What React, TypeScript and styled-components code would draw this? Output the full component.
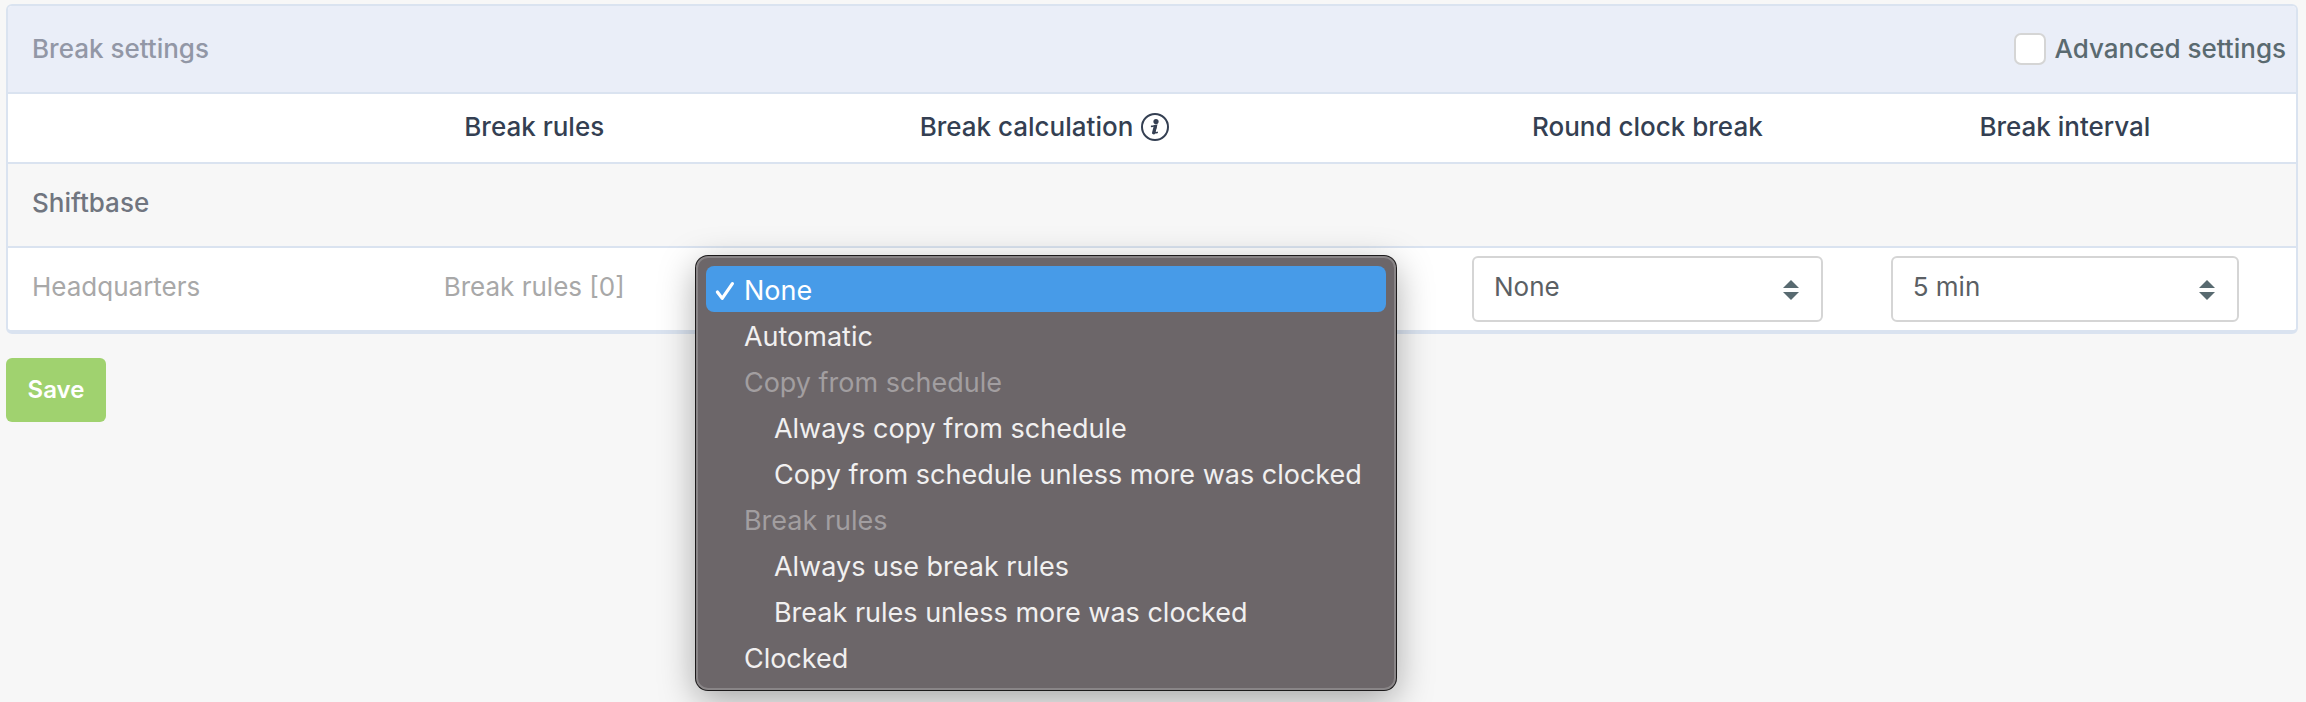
import React from "react";
import styled, { createGlobalStyle } from "styled-components";

const line = "#dae3f0";

const GlobalStyle = createGlobalStyle`
  *, *::before, *::after { box-sizing: border-box; }
  body {
    margin: 0;
    background: #f7f7f7;
    font: 400 26px/32px Inter, sans-serif;
    color: #a8a8a8;
  }
  button, input, select { font: inherit; }
`;

const Page = styled.form`
  min-height: 100vh;
  padding: 4px 8px 4px 6px;
`;

const Panel = styled.section`
  background: #fff;
  border: 2px solid ${line};
  border-bottom-width: 4px;
  border-radius: 6px;
`;

const PanelHeader = styled.header`
  display: flex;
  align-items: center;
  justify-content: space-between;
  padding: 27px 10px 27px 24px;
  background: #eaeef8;
  border-bottom: 2px solid ${line};
  border-radius: 4px 4px 0 0;
`;

const Title = styled.h1`
  margin: 0;
  font-size: 26px;
  font-weight: 500;
  color: #9297a6;
`;

const CheckLabel = styled.label`
  display: flex;
  align-items: center;
  gap: 9px;
  font-weight: 500;
  color: #5a6a70;
`;

const Checkbox = styled.input`
  appearance: none;
  width: 32px;
  height: 32px;
  margin: 0;
  background: #fff;
  border: 2px solid #d5d5d5;
  border-radius: 7px;
  &:checked { background: #479be8; }
`;

const Table = styled.table`
  width: 100%;
  table-layout: fixed;
  border-collapse: separate;
  border-spacing: 0;
`;

const Column = styled.col<{ $share?: string }>`
  width: ${(p) => p.$share ?? "auto"};
`;

const HeadCell = styled.th`
  padding: 17px 0 19px;
  font-weight: 500;
  color: #343f52;
  border-bottom: 2px solid ${line};
`;

const HeadContent = styled.span`
  display: inline-flex;
  align-items: center;
  gap: 8px;
`;

const GroupCell = styled.th`
  padding: 23px 24px 27px;
  text-align: left;
  font-weight: 500;
  color: #70757f;
  background: #f7f7f7;
  border-bottom: 2px solid ${line};
`;

const NameCell = styled.th`
  padding: 6px 24px 10px;
  text-align: left;
  font-weight: 400;
`;

const RulesCell = styled.td`
  padding: 6px 0 10px;
  text-align: center;
`;

const RulesLink = styled.a`
  color: inherit;
  text-decoration: none;
`;

const ControlCell = styled.td`
  padding: 8px 34px;
`;

const SelectBox = styled.div`
  position: relative;
`;

const Select = styled.select`
  display: block;
  appearance: none;
  width: 100%;
  height: 66px;
  padding: 0 56px 4px 20px;
  color: #5b6064;
  background: #fff;
  border: 2px solid #d5d5d5;
  border-radius: 6px;
`;

const SelectArrows = styled.svg`
  position: absolute;
  top: 24px;
  right: 24px;
  pointer-events: none;
`;

const MenuAnchor = styled.div`
  position: relative;
  height: 66px;
`;

const Menu = styled.ul`
  position: absolute;
  z-index: 1;
  top: 0;
  left: 11px;
  right: 8px;
  margin: 0;
  padding: 8px;
  list-style: none;
  font-size: 27px;
  background: #6c6669;
  border: 2px solid #898587;
  border-radius: 12px;
  box-shadow: 0 0 0 1px #1c1a1b, 0 10px 36px rgba(0, 0, 0, 0.34);
`;

const MenuItem = styled.li<{ $nested?: boolean; $muted?: boolean }>`
  display: flex;
  align-items: center;
  height: 46px;
  padding: 3px 8px 0 ${(p) => (p.$nested ? 68 : 38)}px;
  border-radius: 8px;
  white-space: nowrap;
  color: ${(p) => (p.$muted ? "#a29ea0" : "#f1f0f0")};
  &[aria-selected="true"] {
    padding-left: 9px;
    gap: 9px;
    color: #fff;
    background: #479be8;
  }
`;

const SaveButton = styled.button`
  display: block;
  width: 100px;
  height: 64px;
  margin-top: 24px;
  padding: 0;
  font-size: 24px;
  font-weight: 600;
  color: #fff;
  background: #a0d26f;
  border: 0;
  border-radius: 6px;
`;

function Dropdown({ label, options }: { label: string; options: string[] }) {
  return (
    <SelectBox>
      <Select aria-label={label}>
        {options.map((o) => (
          <option key={o}>{o}</option>
        ))}
      </Select>
      <SelectArrows width="16" height="20" viewBox="0 0 16 20" fill="#586a70" aria-hidden="true">
        <path d="M8 0L16 8H0zM0 12H16L8 20z" />
      </SelectArrows>
    </SelectBox>
  );
}

function InfoIcon() {
  return (
    <svg width="28" height="28" viewBox="0 0 28 28" aria-hidden="true">
      <circle cx="14" cy="14" r="13" fill="none" stroke="#343f52" strokeWidth="2" />
      <circle cx="15" cy="8.6" r="2.6" fill="#343f52" />
      <path
        d="M10.6 13.4C12.4 13 14 12.8 15.4 12.4L13.6 19.2Q13.4 20.3 16.2 19.4"
        fill="none"
        stroke="#343f52"
        strokeWidth="1.6"
        strokeLinecap="round"
      />
      <path d="M14.3 13.4L12.6 19.8" stroke="#343f52" strokeWidth="3.2" strokeLinecap="round" />
    </svg>
  );
}

function CheckMark() {
  return (
    <svg width="20" height="20" viewBox="0 0 20 20" aria-hidden="true">
      <path
        d="M2.4 11L7.2 17.4L17.4 2.6"
        fill="none"
        stroke="#fff"
        strokeWidth="3.2"
        strokeLinecap="round"
        strokeLinejoin="round"
      />
    </svg>
  );
}

const menuItems: { text: string; nested?: boolean; heading?: boolean; selected?: boolean }[] = [
  { text: "None", selected: true },
  { text: "Automatic" },
  { text: "Copy from schedule", heading: true },
  { text: "Always copy from schedule", nested: true },
  { text: "Copy from schedule unless more was clocked", nested: true },
  { text: "Break rules", heading: true },
  { text: "Always use break rules", nested: true },
  { text: "Break rules unless more was clocked", nested: true },
  { text: "Clocked" },
];

export default function App() {
  return (
    <>
      <GlobalStyle />
      <Page>
        <Panel>
          <PanelHeader>
            <Title>Break settings</Title>
            <CheckLabel>
              <Checkbox type="checkbox" />
              Advanced settings
            </CheckLabel>
          </PanelHeader>
          <Table>
            <colgroup>
              <Column $share="17.9%" />
              <Column $share="10.2%" />
              <Column />
              <Column $share="18.3%" />
              <Column $share="18.2%" />
              <Column $share="1%" />
            </colgroup>
            <thead>
              <tr>
                <HeadCell />
                <HeadCell scope="col">Break rules</HeadCell>
                <HeadCell scope="col">
                  <HeadContent>
                    Break calculation
                    <InfoIcon />
                  </HeadContent>
                </HeadCell>
                <HeadCell scope="col">Round clock break</HeadCell>
                <HeadCell scope="col">Break interval</HeadCell>
                <HeadCell />
              </tr>
            </thead>
            <tbody>
              <tr>
                <GroupCell colSpan={6} scope="rowgroup">Shiftbase</GroupCell>
              </tr>
              <tr>
                <NameCell scope="row">Headquarters</NameCell>
                <RulesCell>
                  <RulesLink href="#break-rules">Break rules [0]</RulesLink>
                </RulesCell>
                <ControlCell>
                  <MenuAnchor>
                    <Menu role="listbox" aria-label="Break calculation">
                      {menuItems.map((item) => (
                        <MenuItem
                          key={item.text}
                          role={item.heading ? "presentation" : "option"}
                          aria-selected={item.heading ? undefined : !!item.selected}
                          $nested={item.nested}
                          $muted={item.heading}
                        >
                          {item.selected && <CheckMark />}
                          {item.text}
                        </MenuItem>
                      ))}
                    </Menu>
                  </MenuAnchor>
                </ControlCell>
                <ControlCell>
                  <Dropdown label="Round clock break" options={["None", "Up", "Down"]} />
                </ControlCell>
                <ControlCell>
                  <Dropdown label="Break interval" options={["5 min", "10 min", "15 min"]} />
                </ControlCell>
                <td />
              </tr>
            </tbody>
          </Table>
        </Panel>
        <SaveButton type="button">Save</SaveButton>
      </Page>
    </>
  );
}
